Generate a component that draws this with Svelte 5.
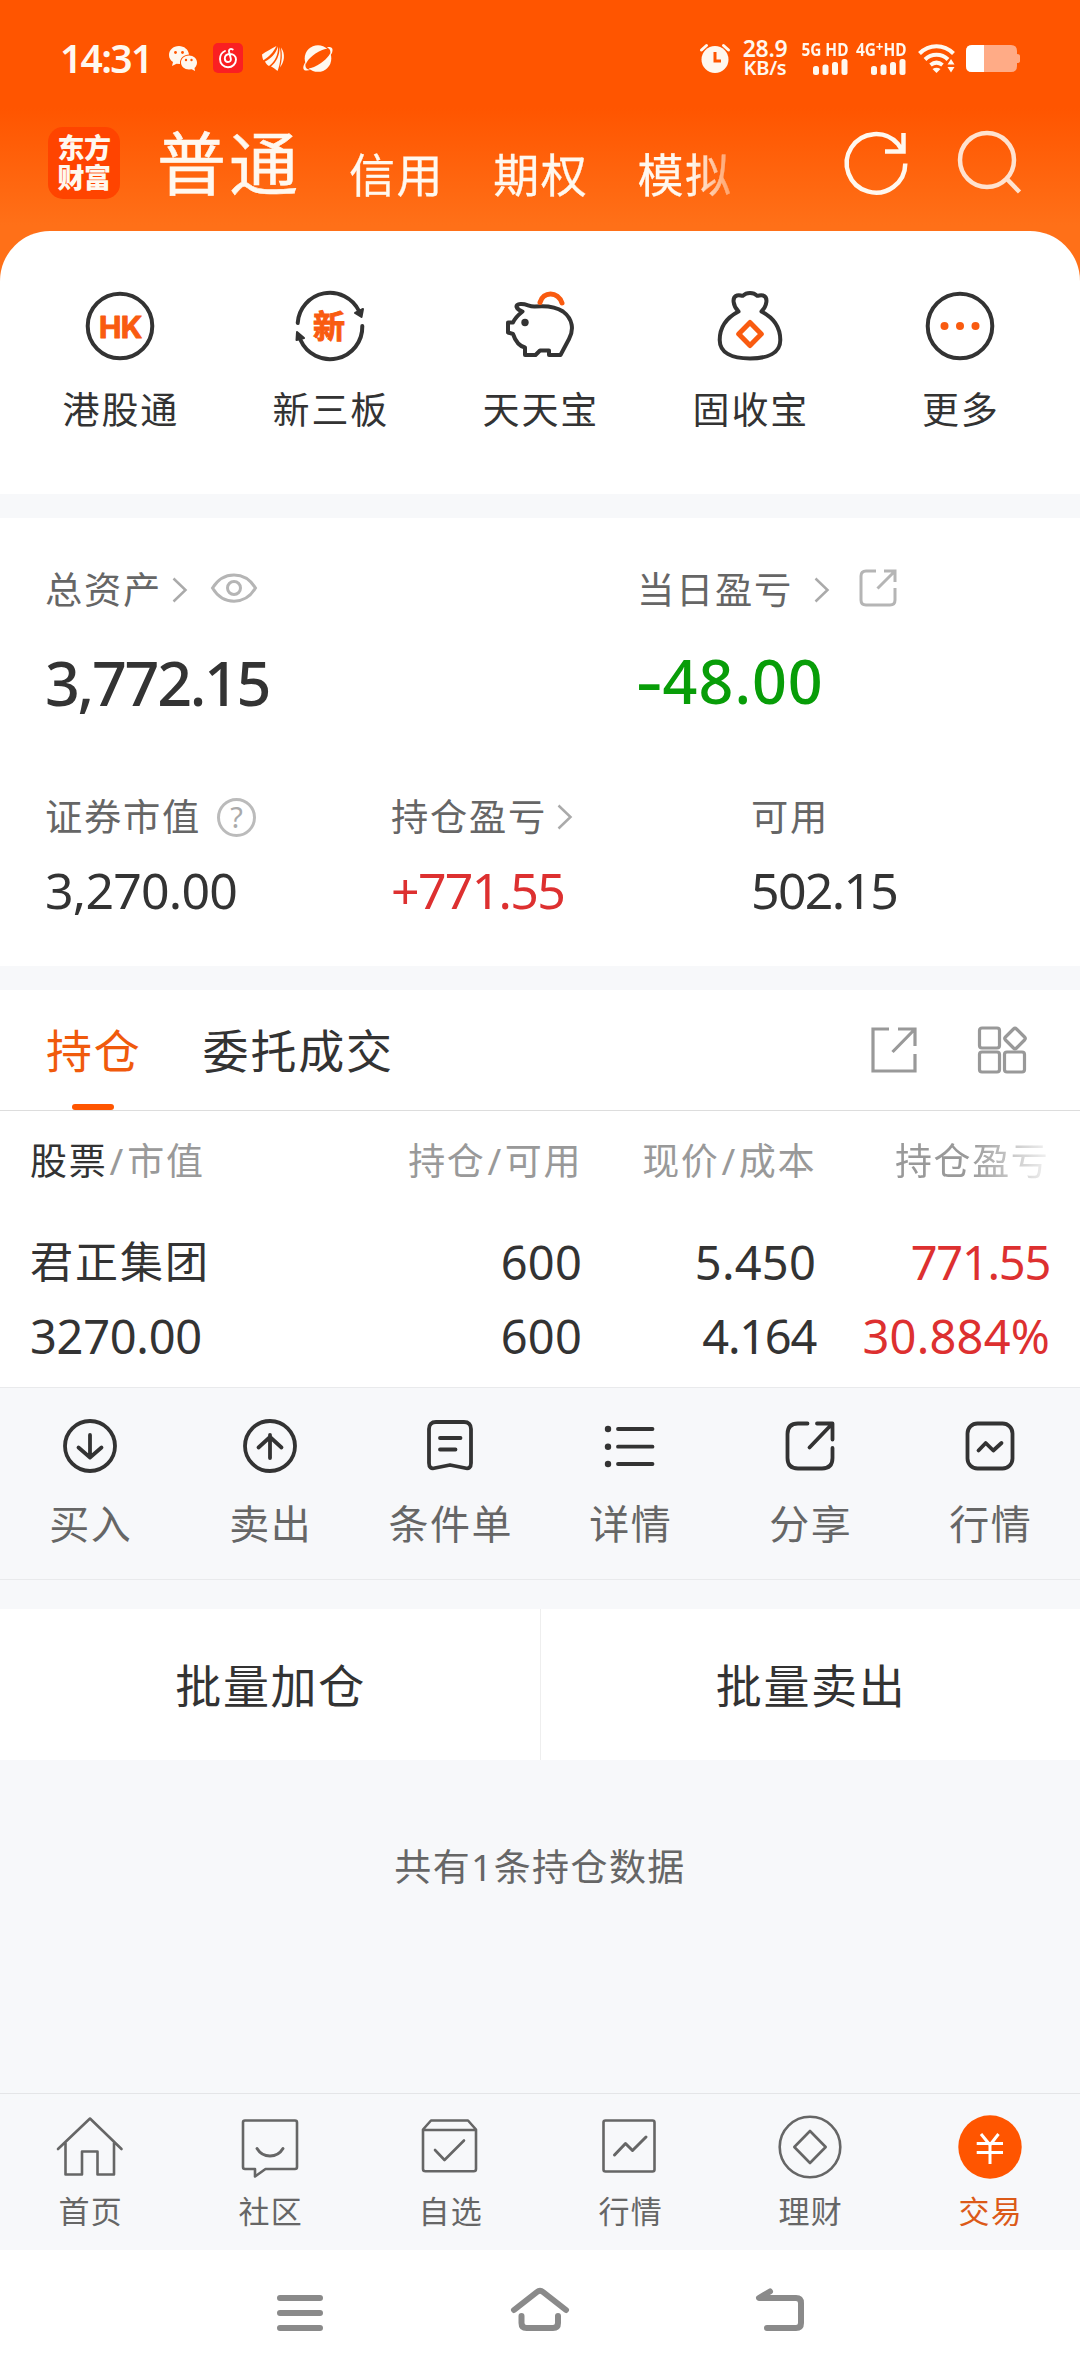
<script>
	const accounts = ["信用", "期权", "模拟"]

	// icon bodies are drawn around a 0,0 centre
	const shortcuts = [
		{
			label: "港股通",
			icon: `<circle r="32.3"/><text x="0.300" y="11.500" text-anchor="middle" font-family="Inter, sans-serif" font-size="30" font-weight="700" letter-spacing="-0.600" fill="#f95b10" stroke="#f95b10" stroke-width="1" stroke-linejoin="round">HK</text>`,
		},
		{
			label: "新三板",
			icon: `<path d="M-32.3 -3A32.3 32.3 0 0 1 29 -15M32.3 0A32.3 32.3 0 0 1 -29.500 14" stroke-linecap="round"/><path d="M33 -17L31.500 -9L25 -13ZM-33 6L-26 12L-33.500 14Z" fill="#333" stroke-width="2" stroke-linejoin="round"/><text x="0" y="11.500" text-anchor="middle" font-size="32" font-weight="700" fill="#f95b10" stroke="#f95b10" stroke-width="1">新</text>`,
		},
		{
			label: "天天宝",
			icon: `<path d="M-17.500 -14.500C-24 -17 -26 -21.500 -19.500 -22C-13 -22.500 -11 -19 -5 -19.500C6 -20.500 15 -20 23 -14.500C33 -7 34 4 29 13L20.500 29H9V24.500H0L-4.500 29H-15V21.500C-21 20 -25 14 -27 8L-32 6.500V-3.500H-27C-25 -8 -22.500 -10.500 -17.500 -14.500Z" stroke-linejoin="round"/><path d="M0 -23.500C3 -35 18 -35 22 -23" stroke="#f95b10" stroke-width="5" stroke-linecap="round"/><circle cx="-15" cy="-3.500" r="3.700" fill="#333" stroke="none"/>`,
		},
		{
			label: "固收宝",
			icon: `<path d="M-11.500 -14.500C-17 -20 -18.500 -29 -13 -30.500C-10 -31.300 -9 -30 -7 -30.300C-3.500 -34 3.500 -34 7 -30.300C9 -30 10 -31.300 13 -30.500C18.500 -29 17 -20 11.500 -14.500C24 -8 30.300 2 30.300 14C30.300 27 18 32.500 0 32.500C-18 32.500 -30.300 27 -30.300 14C-30.300 2 -24 -8 -11.500 -14.500Z" stroke-linejoin="round"/><path d="M0 -3.500L11.300 8L0 19.500L-11.300 8Z" stroke="#f95b10" stroke-width="5" stroke-linejoin="round"/>`,
		},
		{
			label: "更多",
			icon: `<circle r="32.3"/><g fill="#f95b10" stroke="none"><circle cx="-15.500" r="4"/><circle r="4"/><circle cx="15.500" r="4"/></g>`,
		},
	]

	const positions = [
		{
			name: "君正集团",
			value: "3270.00",
			held: "600",
			available: "600",
			price: "5.450",
			cost: "4.164",
			profit: "771.55",
			rate: "30.884%",
		},
	]

	const actions = [
		{
			label: "买入",
			icon: `<circle r="25"/><path d="M0 -11V11M-11.500 1.500L0 11.500L11.500 1.500"/>`,
		},
		{
			label: "卖出",
			icon: `<circle r="25"/><path d="M0 12V-11M-11.500 1.500L0 -9L11.500 1.500"/>`,
		},
		{
			label: "条件单",
			icon: `<path d="M-14 -24H14Q21 -24 21 -17V17Q21 23.500 15 22L0 19L-15 22Q-21 23.500 -21 17V-17Q-21 -24 -14 -24Z"/><path d="M-10 -8H10.500M-10 3.500H5.500"/>`,
		},
		{
			label: "详情",
			icon: `<path d="M-12 -17H22.500M-12 0.700H22.500M-12 18H22.500"/><g fill="#333" stroke="none"><circle cx="-22" cy="-17" r="3.200"/><circle cx="-22" cy="0.700" r="3.200"/><circle cx="-22" cy="18" r="3.200"/></g>`,
		},
		{
			label: "分享",
			icon: `<path d="M-2.500 -22.500H-12Q-22.500 -22.500 -22.500 -12V12Q-22.500 22.500 -12 22.500H12Q22.500 22.500 22.500 12V2M7 -22.500H22.500V-6.500M22 -22L-0.500 1.500"/>`,
		},
		{
			label: "行情",
			icon: `<rect x="-22.500" y="-22.500" width="45" height="45" rx="10"/><path d="M-11.500 4.500L-4.300 -3L3.300 4.500L11.500 -3"/>`,
		},
	]

	const tabs = [
		{
			label: "首页",
			icon: `<path d="M-32 2L0 -28.500L31.500 2M-24.500 -4V27.500H-8V4.500H7.500V27.500H24V-4"/>`,
		},
		{
			label: "社区",
			icon: `<path d="M-25 -26.500H25Q27 -26.500 27 -24.500V20Q27 22 25 22H-4.500L-15 29.500V22H-25Q-27 22 -27 20V-24.500Q-27 -26.500 -25 -26.500Z"/><path d="M-13 1.500C-7 11.500 7 11.500 13 1.500" stroke-width="3"/>`,
		},
		{
			label: "自选",
			icon: `<path d="M-27 -17.500L-19 -26.500H18L26 -17.500V22Q26 24.300 23.700 24.300H-24.500Q-27 24.300 -27 22ZM-27 -17H26M-15 3L-5.500 13L14 -6.500"/>`,
		},
		{
			label: "行情",
			icon: `<rect x="-26.500" y="-26.500" width="51" height="51" rx="2"/><path d="M-15.500 8L-4.500 -3.500L2.500 3.500L16 -10" stroke-width="3"/>`,
		},
		{
			label: "理财",
			icon: `<circle r="30.300"/><path d="M0 -16L15.700 0L0 16L-15.700 0Z"/>`,
		},
		{
			label: "交易",
			active: true,
			icon: `<circle r="31.700" fill="#ff5500" stroke="none"/><path d="M-9 -13L0 -2L8.500 -13M-13.300 -3.500H13M-13.300 5.500H13M0 -2V17" stroke="#fff" stroke-width="3" stroke-linecap="butt"/>`,
		},
	]

	const hasOne = (value) => value.includes("1")
</script>

{#snippet chevron()}
	<svg class="chevron" viewBox="0 0 16 26"><path d="M1.500 1.500L13.500 13L1.500 24.500" /></svg>
{/snippet}

{#snippet signal(name)}
	<div class="signal">
		<span class="net">{@html name}</span>
		<svg width="35" height="16" viewBox="0 0 35 16">
			<rect x="0" y="7" width="6" height="9" rx="2.500" />
			<rect x="9.500" y="5.500" width="6" height="10.500" rx="2.500" />
			<rect x="19" y="3" width="6" height="13" rx="2.500" />
			<rect x="28.500" y="0" width="6" height="16" rx="2.500" />
		</svg>
	</div>
{/snippet}

<div class="screen">
	<header>
		<div class="status">
			<span class="time">14:31</span>
			<svg class="wechat" viewBox="0 0 28 25" fill="#fff8ef">
				<path d="M10 0C4 0 0 4 0 9C0 12 1.500 14.500 4 16L3 20L7.500 17.700L11 18C10.500 12 15 8.500 20 8.500C19.500 3.500 15 0 10 0Z" />
				<path d="M20 9.500C15.500 9.500 12 12.500 12 16.500C12 20.500 15.500 23.500 20 23.500L22.700 23.200L26 25L25.500 22C27 20.700 28 18.800 28 16.500C28 12.500 24.500 9.500 20 9.500Z" />
				<g fill="#ff5500"><circle cx="6.500" cy="6.500" r="1.400" /><circle cx="13.500" cy="6.500" r="1.400" /><circle cx="17" cy="14" r="1.200" /><circle cx="22.500" cy="14" r="1.200" /></g>
			</svg>
			<svg class="music" viewBox="0 0 30 30">
				<rect width="30" height="30" rx="5" fill="#fa1f22" />
				<path d="M12 8C8.500 9.500 7 12.500 7 16C7 20.800 10.500 24.200 15 24.200C19.500 24.200 23 20.800 23 16.500C23 13 20.300 10.800 16.800 11C13.500 11.200 11.800 13 11.800 15.500C11.800 17.500 13 19 15 19C17.200 19 18.300 17.500 17.800 15.500L16 8.500C15.700 6.500 17.500 5 19.700 6.500" fill="none" stroke="#fff" stroke-width="1.900" stroke-linecap="round" />
			</svg>
			<svg class="wing" viewBox="0 0 23 25" fill="#fff8ef">
				<path d="M14.500 0C9.500 2.800 4 5.500 0 8.500C0.200 10.800 0.500 12.500 1.500 14.200C6 11.500 11.500 6.500 14.500 0Z" />
				<path d="M16 0.500C14 7.500 8.500 13 3 15.500C4 17.700 5.300 19 7 20C13 16 16.500 8 16 0.500Z" />
				<path d="M17.500 1C18 9.500 14 16.500 9 20.500C11 21.300 13 23 15.500 25C18.500 18 19.500 7.500 17.500 1Z" />
				<path d="M19 1.500C20.500 8.500 20 15 18 21.500C22.300 16 23.800 8 19 1.500Z" />
			</svg>
			<svg class="planet" viewBox="0 0 30 27">
				<circle cx="15" cy="13.500" r="13.300" fill="#fff8ef" />
				<path d="M3 22.500C1.500 19.500 5 13.500 12.500 8.500C19 4 25.500 2.500 27.500 4.500C29 7.500 24.500 13.500 18 18C11.500 22.500 5 24.500 3 22.500Z" fill="#ff5500" />
				<path d="M24 2.200C29 1.500 30.500 3.500 29 8L26.500 11.500C28 7 28 4.500 24 2.200ZM3.500 15.500C0 20 -0.500 24 1.500 25.200C3.500 26 6 25.500 8 24.500C3 25 1 22 3.500 15.500Z" fill="#fff8ef" />
			</svg>

			<svg class="alarm" viewBox="0 0 30 29">
				<circle cx="15" cy="15.500" r="13.500" fill="#fff8ef" />
				<path d="M1.500 6L6.500 1.500M28.500 6L23.500 1.500" stroke="#fff8ef" stroke-width="3" stroke-linecap="round" />
				<path d="M15 8V17H21" fill="none" stroke="#ff5500" stroke-width="3" />
			</svg>
			<div class="speed"><span>28.9</span><span class="unit">KB/s</span></div>
			{@render signal("5G HD")}
			{@render signal("4G<sup>+</sup>HD")}
			<svg class="wifi" viewBox="0 0 38 29" fill="none" stroke="#fff8ef" stroke-width="4">
				<path d="M1.500 9.500C11 -0.300 26 -0.300 35.500 9.500" />
				<path d="M7 15.500C13.500 9.300 23.500 9.300 30 15.500" />
				<path d="M12.500 21C16.300 18 20.700 18 24.500 21" />
				<path d="M14.500 25Q18.500 22.500 22.500 25L18.500 29Z" fill="#fff8ef" stroke="none" />
				<path d="M33 15L36.500 20.500H29.500ZM33 28.500L36.500 23H29.500Z" fill="#fff8ef" stroke="none" />
			</svg>
			<svg class="battery" viewBox="0 0 54 27">
				<path d="M6 0H45Q51 0 51 6V9Q54 9 54 11V16Q54 18 51 18V21Q51 27 45 27H6Q0 27 0 21V6Q0 0 6 0Z" fill="#ffab86" />
				<path d="M6 0H18V27H6Q0 27 0 21V6Q0 0 6 0Z" fill="#fff" />
			</svg>
		</div>

		<nav>
			<div class="logo"><span>东方</span><span>财富</span></div>
			<span class="current">普通</span>
			<div class="accounts">
				{#each accounts as name}
					<span>{name}</span>
				{/each}
			</div>
			<svg class="refresh" viewBox="0 0 64 64">
				<path d="M60.300 32.500A29.300 29.300 0 1 1 53 13L58 20.500M58.500 2V20.500H40" />
			</svg>
			<svg class="search" viewBox="0 0 64 64">
				<circle cx="29" cy="29" r="27" />
				<path d="M48 47L61.500 61" />
			</svg>
		</nav>
	</header>

	<section class="shortcuts">
		{#each shortcuts as item}
			<div class="shortcut">
				<svg viewBox="-36 -36 72 72">{@html item.icon}</svg>
				<span>{item.label}</span>
			</div>
		{/each}
	</section>

	<section class="assets">
		<div class="row totals">
			<div class="cell">
				<div class="label">
					总资产{@render chevron()}
					<svg class="eye" viewBox="0 0 46 30"><path d="M1.500 15C12 -2.500 34 -2.500 44.500 15C34 32.500 12 32.500 1.500 15Z" /><circle cx="23" cy="15" r="6.500" /></svg>
				</div>
				<div class="big">3,772.15</div>
			</div>
			<div class="cell">
				<div class="label today">
					当日盈亏{@render chevron()}
					<svg class="share" viewBox="0 0 38 38"><path d="M17 2H7Q2 2 2 7V31Q2 36 7 36H31Q36 36 36 31V19M25 2H36V13M35.500 2.500L18.500 19.500" /></svg>
				</div>
				<div class="big green"><span class="minus">-</span>48.00</div>
			</div>
		</div>
		<div class="row details">
			<div class="cell">
				<div class="label">
					证券市值
					<span class="help">?</span>
				</div>
				<div class="amount">3,270.00</div>
			</div>
			<div class="cell">
				<div class="label">持仓盈亏{@render chevron()}</div>
				<div class="amount red tight">+771.55</div>
			</div>
			<div class="cell">
				<div class="label">可用</div>
				<div class="amount tight">502.15</div>
			</div>
		</div>
	</section>

	<section class="holdings">
		<div class="tabs">
			<span class="tab active">持仓</span>
			<span class="tab">委托成交</span>
			<svg class="export" viewBox="0 0 46 46"><path d="M18 2H2V44H44V27M27 2H44V19M43.500 2.500L21.500 25" /></svg>
			<svg class="grid" viewBox="0 0 50 48">
				<rect x="1.500" y="2" width="20" height="20" rx="2.500" />
				<rect x="1.500" y="26" width="20" height="20" rx="2.500" />
				<rect x="26.500" y="26" width="20" height="20" rx="2.500" />
				<path d="M35.500 3Q37 1.500 38.500 3L46.500 11Q48 12.500 46.500 14L38.500 22Q37 23.500 35.500 22L27.500 14Q26 12.500 27.500 11Z" />
			</svg>
		</div>
		<div class="table head">
			<span><b>股票</b><i>/</i>市值</span>
			<span>持仓<i>/</i>可用</span>
			<span>现价<i>/</i>成本</span>
			<span class="fade">持仓盈亏</span>
		</div>
		{#each positions as p}
			<div class="table first">
				<span class="name">{p.name}</span>
				<span>{p.held}</span>
				<span>{p.price}</span>
				<span class="red" class:tight={hasOne(p.profit)}>{p.profit}</span>
			</div>
			<div class="table second">
				<span>{p.value}</span>
				<span>{p.available}</span>
				<span class:tight={hasOne(p.cost)}>{p.cost}</span>
				<span class="red" class:tight={hasOne(p.rate)}>{p.rate}</span>
			</div>
		{/each}
	</section>

	<section class="actions">
		{#each actions as item}
			<div class="action">
				<svg viewBox="-30 -30 60 60">{@html item.icon}</svg>
				<span>{item.label}</span>
			</div>
		{/each}
	</section>

	<section class="batch">
		<button>批量加仓</button>
		<button>批量卖出</button>
	</section>

	<p class="count">共有1条持仓数据</p>

	<footer>
		{#each tabs as item}
			<div class="foot" class:active={item.active}>
				<svg viewBox="-34 -34 68 68">{@html item.icon}</svg>
				<span>{item.label}</span>
			</div>
		{/each}
	</footer>

	<div class="system">
		<svg viewBox="-30 -30 60 60"><path d="M-20 -15H20M-20 0H20M-20 15H20" /></svg>
		<svg viewBox="-30 -30 60 60"><path d="M-26 -3L-3 -21Q0 -23.500 3 -21L26 -3M-18.500 3V10Q-18.500 15 -13.500 15H13Q18 15 18 10V3" /></svg>
		<svg viewBox="-30 -30 60 60"><path d="M-10 -21.500L-21 -15H16Q21 -15 21 -10V10Q21 15 16 15H-13" /></svg>
	</div>
</div>

<style>
	:global(body) {
		margin: 0;
		background: #ffffff;
	}

	.screen {
		display: flex;
		flex-direction: column;
		width: 1080px;
		height: 2376px;
		overflow: hidden;
		background: #f7f8fa;
		color: #333333;
		font-family: "Noto Sans", "Noto Sans CJK SC", sans-serif;
		white-space: nowrap;
	}

	svg {
		flex: none;
		overflow: visible;
	}

	header {
		height: 281px;
		flex: none;
		background: linear-gradient(#ff5500 108px, #ff7018 225px);
	}

	.status {
		display: flex;
		align-items: center;
		height: 116px;
		padding: 0 60px 0 60px;
		color: #fff8ef;
		font-weight: 700;
	}

	.time {
		width: 109px;
		font-size: 39px;
		font-weight: 600;
		letter-spacing: -1.7px;
		line-height: 40px;
	}

	.wechat {
		width: 28px;
		height: 25px;
	}

	.music {
		width: 30px;
		height: 30px;
		margin-left: 15.5px;
	}

	.wing {
		width: 23px;
		height: 25px;
		margin-left: 19px;
	}

	.planet {
		width: 30px;
		height: 27px;
		margin-left: 18px;
	}

	.alarm {
		width: 30px;
		height: 29px;
		margin-left: auto;
	}

	.speed {
		display: flex;
		flex-direction: column;
		align-items: center;
		width: 48px;
		margin-left: 11px;
		font-size: 23px;
		font-weight: 600;
		line-height: 19px;
		letter-spacing: -0.3px;
	}

	.speed .unit {
		font-size: 20px;
	}

	.signal {
		display: flex;
		flex-direction: column;
		align-items: flex-end;
		width: 48px;
		margin-left: 10px;
	}

	.speed + .signal {
		margin-left: 11px;
	}

	.signal svg {
		fill: #fff8ef;
	}

	.net {
		height: 17px;
		font-size: 17.5px;
		line-height: 14px;
		transform: scaleX(0.88);
		transform-origin: right;
	}

	.net :global(sup) {
		font-size: 15px;
		line-height: 0;
		vertical-align: 4px;
	}

	.wifi {
		width: 38px;
		height: 29px;
		margin-left: 12px;
	}

	.battery {
		width: 54px;
		height: 27px;
		margin-left: 10px;
	}

	nav {
		display: flex;
		align-items: center;
		height: 94px;
		padding: 0 58px 0 48px;
		color: #fff8ef;
	}

	.logo {
		display: flex;
		flex-direction: column;
		align-items: center;
		justify-content: center;
		width: 72px;
		height: 72px;
		border-radius: 15px;
		background: #ff4400;
		font-size: 27px;
		font-weight: 800;
		line-height: 30px;
		letter-spacing: -0.5px;
	}

	.current {
		margin-left: 37px;
		font-size: 69px;
		line-height: 80px;
		letter-spacing: 3px;
		-webkit-text-stroke: 0.6px #fff8ef;
	}

	.accounts {
		display: flex;
		gap: 49px;
		width: 385px;
		margin: 22px 0 0 48px;
		font-size: 46px;
		line-height: 56px;
		letter-spacing: 1.6px;
		-webkit-text-stroke: 0.3px #fff8ef;
		-webkit-mask-image: linear-gradient(90deg, #000 342px, transparent 408px);
		mask-image: linear-gradient(90deg, #000 342px, transparent 408px);
	}

	.refresh,
	.search {
		width: 64px;
		height: 64px;
		fill: none;
		stroke: #fff8ef;
		stroke-width: 4.5;
	}

	.refresh {
		margin-left: auto;
	}

	.search {
		margin-left: 49px;
		stroke: #ffe2cf;
	}

	.shortcuts {
		display: flex;
		box-sizing: border-box;
		flex: none;
		height: 263px;
		margin-top: -50px;
		padding: 59px 15px 0;
		border-radius: 50px 50px 0 0;
		background: #ffffff;
	}

	.shortcut {
		display: flex;
		flex: 1;
		flex-direction: column;
		align-items: center;
		font-size: 37px;
		line-height: 50px;
		letter-spacing: 1.8px;
	}

	.shortcut span,
	.action span,
	.foot span {
		padding-left: 1.6px;
	}

	.shortcut svg {
		width: 72px;
		height: 72px;
		margin-bottom: 23px;
		fill: none;
		stroke: #333333;
		stroke-width: 4;
	}

	.assets {
		flex: none;
		box-sizing: border-box;
		height: 448px;
		margin-top: 24px;
		padding: 47px 45px 0;
		background: #ffffff;
	}

	.row {
		display: grid;
	}

	.totals {
		grid-template-columns: 592px 1fr;
		height: 227px;
	}

	.details {
		grid-template-columns: 346px 360px 1fr;
	}

	.label {
		display: flex;
		align-items: center;
		height: 50px;
		color: #666666;
		font-size: 37.3px;
		line-height: 50px;
		letter-spacing: 1.7px;
	}

	.chevron {
		width: 16px;
		height: 26px;
		margin-left: 10px;
		fill: none;
		stroke: #aaaaaa;
		stroke-width: 2.5;
	}

	.today .chevron {
		margin-left: 21px;
	}

	.eye,
	.share {
		fill: none;
		stroke: #b5b5b5;
		stroke-width: 3;
	}

	.eye {
		width: 46px;
		height: 30px;
		margin: -4px 0 0 23px;
	}

	.share {
		width: 38px;
		height: 38px;
		margin: -4px 0 0 29px;
	}

	.help {
		box-sizing: border-box;
		width: 39px;
		height: 39px;
		margin-left: 16px;
		border: 3px solid #bbbbbb;
		border-radius: 50%;
		color: #aaaaaa;
		font-size: 29px;
		line-height: 32px;
		letter-spacing: 0;
		text-align: center;
	}

	.big {
		margin-top: 28px;
		font-size: 61px;
		font-weight: 500;
		line-height: 80px;
		letter-spacing: -2.3px;
	}

	.big.green {
		margin-top: 26px;
		letter-spacing: 1px;
	}

	.minus {
		display: inline-block;
		margin: 0 6px 0 -1px;
		transform: scaleX(1.35);
		transform-origin: left;
	}

	.amount {
		margin-top: 18px;
		font-size: 50px;
		line-height: 60px;
		letter-spacing: -0.8px;
	}

	.amount.tight {
		letter-spacing: -1.7px;
	}

	.green {
		color: #089d08;
	}

	.red {
		color: #dd3030;
	}

	.holdings {
		flex: none;
		height: 397px;
		margin-top: 24px;
		background: #ffffff;
	}

	.tabs {
		display: flex;
		box-sizing: border-box;
		align-items: center;
		height: 121px;
		padding: 0 52px 0 46px;
		border-bottom: 1px solid #dddddd;
		font-size: 46px;
		letter-spacing: 1.8px;
	}

	.tab {
		position: relative;
		margin-right: 61px;
		line-height: 120px;
	}

	.tab.active {
		color: #f05a0c;
	}

	.tab.active::after {
		content: "";
		position: absolute;
		bottom: 0;
		left: 26px;
		width: 42px;
		height: 6px;
		border-radius: 3px;
		background: #ff5500;
	}

	.export,
	.grid {
		fill: none;
		stroke: #999999;
		stroke-width: 3.2;
	}

	.export {
		width: 46px;
		height: 46px;
		margin-left: auto;
	}

	.grid {
		width: 50px;
		height: 48px;
		margin-left: 61px;
	}

	.table {
		display: grid;
		grid-template-columns: 1fr 234px 234px 234px;
		padding: 0 30px 0 30px;
		font-size: 47px;
		line-height: 74px;
		letter-spacing: 0.2px;
		text-align: right;
	}

	.table span:first-child {
		letter-spacing: -0.3px;
		text-align: left;
	}

	.table .tight {
		letter-spacing: -1.3px;
	}

	.head {
		padding-top: 25px;
		color: #999999;
		font-size: 37px;
		line-height: 50px;
		letter-spacing: 1.6px;
	}

	.head span:first-child {
		letter-spacing: 1.8px;
	}

	.head b {
		color: #333333;
		font-weight: 400;
	}

	.head i {
		margin: 0 2px;
		font-style: normal;
	}

	.head .fade {
		margin-left: 79px;
		text-align: left;
		-webkit-mask-image: linear-gradient(90deg, #000 75px, transparent 165px);
		mask-image: linear-gradient(90deg, #000 75px, transparent 165px);
	}

	.first {
		padding-top: 39px;
	}

	.first .name:first-child {
		font-size: 43px;
		letter-spacing: 2px;
	}

	.actions {
		display: flex;
		box-sizing: border-box;
		flex: none;
		height: 193px;
		padding-top: 28px;
		border: solid #e9eaec;
		border-width: 1px 0;
	}

	.action {
		display: flex;
		flex: 1;
		flex-direction: column;
		align-items: center;
		color: #666666;
		font-size: 40px;
		line-height: 50px;
		letter-spacing: 1.6px;
	}

	.action svg {
		width: 60px;
		height: 60px;
		margin-bottom: 23px;
		fill: none;
		stroke: #333333;
		stroke-width: 3.8;
		stroke-linecap: round;
		stroke-linejoin: round;
	}

	.batch {
		display: flex;
		flex: none;
		height: 151px;
		margin-top: 29px;
		background: #ffffff;
	}

	.batch button {
		flex: 1;
		padding: 0 0 4px 1.6px;
		border: 0;
		background: none;
		color: #333333;
		font: inherit;
		font-size: 46px;
		letter-spacing: 1.6px;
	}

	.batch button + button {
		border-left: 1px solid #eeeeee;
	}

	.count {
		margin: 82px 0 0;
		color: #666666;
		font-size: 37px;
		line-height: 50px;
		letter-spacing: 1.4px;
		text-align: center;
	}

	footer {
		display: flex;
		box-sizing: border-box;
		flex: none;
		height: 157px;
		margin-top: auto;
		padding-top: 19px;
		border-top: 1px solid #e4e5e7;
	}

	.foot {
		display: flex;
		flex: 1;
		flex-direction: column;
		align-items: center;
		color: #666666;
		font-size: 31px;
		line-height: 40px;
		letter-spacing: 1.4px;
	}

	.foot.active {
		color: #dc5a18;
	}

	.foot svg {
		width: 68px;
		height: 68px;
		margin-bottom: 10px;
		fill: none;
		stroke: #666666;
		stroke-width: 2.6;
		stroke-linecap: round;
		stroke-linejoin: round;
	}

	.system {
		display: flex;
		flex: none;
		align-items: center;
		justify-content: center;
		gap: 180px;
		height: 126px;
		background: #ffffff;
	}

	.system svg {
		width: 60px;
		height: 60px;
		fill: none;
		stroke: #8a8a8a;
		stroke-width: 6;
		stroke-linecap: round;
		stroke-linejoin: round;
	}
</style>
